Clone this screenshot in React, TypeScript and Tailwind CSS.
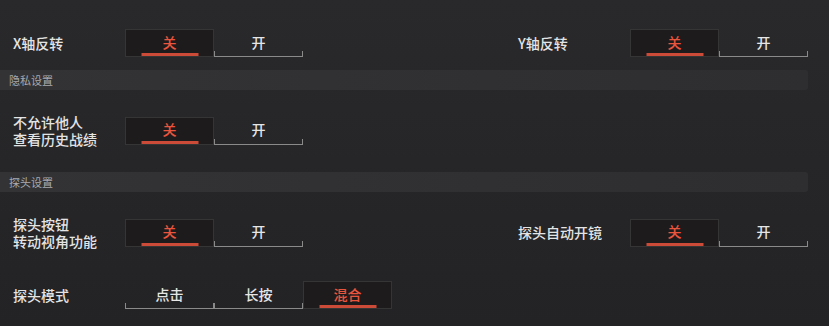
import React from "react";

const font = { fontFamily: '"Noto Sans CJK SC", "Noto Sans", sans-serif' };

function Seg({ label, active }: { label: string; active: boolean }) {
  if (active) {
    return (
      <div className="relative flex h-[28px] w-[89px] items-center justify-center border border-[#363536] bg-[#1d1b1c] text-[14px] font-medium text-[#ea553e]">
        <span className="-mt-[2px]">{label}</span>
        <div className="absolute bottom-[0px] left-1/2 h-[3px] w-[57px] -translate-x-1/2 bg-[#cc4b38]" />
      </div>
    );
  }
  return (
    <div className="relative flex h-[28px] w-[89px] items-center justify-center text-[14px] font-medium text-[#e6e6e6]">
      <span className="-mt-[2px]">{label}</span>
      <div className="absolute bottom-0 left-0 right-0 h-[6px] border-x border-b border-[#8a8a8a]" />
    </div>
  );
}

function Row({ label, options, activeIdx }: { label: React.ReactNode; options: string[]; activeIdx: number }) {
  return (
    <div className="flex items-center pl-[13px]">
      <div className="w-[112px] text-[14px] font-medium leading-[17px] text-[#e4e4e4]">{label}</div>
      <div className="flex">
        {options.map((o, i) => (
          <Seg key={o} label={o} active={i === activeIdx} />
        ))}
      </div>
    </div>
  );
}

function Header({ title }: { title: string }) {
  return (
    <div className="flex h-[20px] w-[808px] items-center rounded-r-[3px] bg-gradient-to-r from-[#333335] to-[#2e2e30] pl-[9px] text-[11px] text-[#a9a9ab]">
      {title}
    </div>
  );
}

export default function App() {
  const oc = ["关", "开"];
  return (
    <div
      className="flex h-[326px] w-[829px] flex-col overflow-hidden bg-gradient-to-b from-[#29292b] via-[#262628] to-[#232325]"
      style={font}
    >
      <div className="grid h-[70px] grid-cols-[505px_1fr] items-end pb-[13px]">
        <Row label="X轴反转" options={oc} activeIdx={0} />
        <Row label="Y轴反转" options={oc} activeIdx={0} />
      </div>
      <Header title="隐私设置" />
      <div className="grid h-[82px] grid-cols-[505px_1fr] items-center pb-[1px]">
        <Row
          label={
            <>
              不允许他人
              <br />
              查看历史战绩
            </>
          }
          options={oc}
          activeIdx={0}
        />
      </div>
      <Header title="探头设置" />
      <div className="grid h-[72px] grid-cols-[505px_1fr] items-center pt-[9px]">
        <Row
          label={
            <>
              探头按钮
              <br />
              转动视角功能
            </>
          }
          options={oc}
          activeIdx={0}
        />
        <Row label="探头自动开镜" options={oc} activeIdx={0} />
      </div>
      <div className="grid h-[62px] grid-cols-[505px_1fr] items-center">
        <Row label="探头模式" options={["点击", "长按", "混合"]} activeIdx={2} />
      </div>
    </div>
  );
}
